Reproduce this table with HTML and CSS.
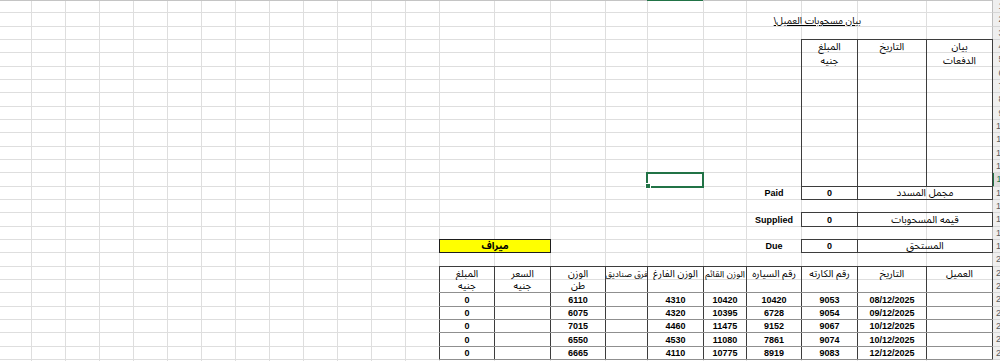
FILE: index.html
```html
<!DOCTYPE html>
<html lang="ar">
<head>
<meta charset="utf-8">
<title>بيان مسحوبات العميل</title>
<link rel="stylesheet" href="styles.css">
</head>
<body>
<main class="sheet" dir="rtl">
  <div class="grid-v"><i></i><i></i><i></i><i></i><i></i><i></i><i></i><i></i><i></i><i></i><i></i><i></i><i></i><i></i><i></i><i></i><i></i><i></i><i></i><i></i><i></i><i></i><i></i><i></i></div>
  <div class="grid-h"><i></i><i></i><i></i><i></i><i></i><i></i><i></i><i></i><i></i><i></i><i></i><i></i><i></i><i></i><i></i><i></i><i></i><i></i><i></i><i></i><i></i><i></i><i></i><i></i><i></i><i></i><i></i></div>
  <div class="cells">
    <div class="rowhead">
      <span>1</span><span>2</span><span>3</span><span>4</span><span>5</span><span>6</span><span>7</span><span>8</span><span>9</span><span>10</span><span>11</span><span>12</span><span>13</span><span class="sel">14</span><span>15</span><span>16</span><span>17</span><span>18</span><span>19</span><span>20</span><span>21</span><span>22</span><span>23</span><span>24</span><span>25</span><span>26</span><span>27</span>
    </div>
    <div class="colsel"></div>
    <div class="title">بيان مسحوبات العميل\</div>

    <div class="t1">
      <div class="t1col"><span>بيان</span><span>الدفعات</span></div>
      <div class="t1col"><span>التاريخ</span></div>
      <div class="t1col"><span>المبلغ</span><span>جنيه</span></div>
    </div>

    <div class="sum r15"><div>مجمل المسدد</div><div class="num">0</div><div class="lbl">Paid</div></div>
    <div class="sum r17"><div>قيمه المسحوبات</div><div class="num">0</div><div class="lbl">Supplied</div></div>
    <div class="sum r19"><div>المستحق</div><div class="num">0</div><div class="lbl">Due</div></div>

    <div class="badge">ميراف</div>
    <div class="selcell"></div>

    <div class="t2 r21 head"><span>العميل</span><span>التاريخ</span><span>رقم الكارته</span><span>رقم السياره</span><span class="tight">الوزن القائم</span><span>الوزن الفارغ</span><span class="tighter">فرق صناديق</span><span>الوزن</span><span>السعر</span><span>المبلغ</span></div>
    <div class="t2 r22 ruled"><span></span><span></span><span></span><span></span><span></span><span></span><span></span><span>طن</span><span>جنيه</span><span>جنيه</span></div>
    <div class="t2 r23 ruled num"><span></span><span>08/12/2025</span><span>9053</span><span>10420</span><span>10420</span><span>4310</span><span></span><span>6110</span><span></span><span>0</span></div>
    <div class="t2 r24 ruled num"><span></span><span>09/12/2025</span><span>9054</span><span>6728</span><span>10395</span><span>4320</span><span></span><span>6075</span><span></span><span>0</span></div>
    <div class="t2 r25 ruled num"><span></span><span>10/12/2025</span><span>9067</span><span>9152</span><span>11475</span><span>4460</span><span></span><span>7015</span><span></span><span>0</span></div>
    <div class="t2 r26 ruled num"><span></span><span>10/12/2025</span><span>9074</span><span>7861</span><span>11080</span><span>4530</span><span></span><span>6550</span><span></span><span>0</span></div>
    <div class="t2 r27 ruled num"><span></span><span>12/12/2025</span><span>9083</span><span>8919</span><span>10775</span><span>4110</span><span></span><span>6665</span><span></span><span>0</span></div>
  </div>
</main>
</body>
</html>
```
FILE: styles.css
```css
:root {
  --cols: [hdr] 17px [A] 66px [B] 69px [C] 56px [D] 55px [E] 43px [F] 56px [G] 42px [H] 55px [I] 56px [J] 55px [K] repeat(12, 34px) [W] 31px [end];
  --rows: repeat(27, 13.3333px);
  --rule: #3d3d3d;
  --soft: #8f8f8f;
  --grid: #dedede;
  --green: #217346;
}

html, body {
  margin: 0;
  overflow: hidden;
  background: #ffffff;
}

body {
  font-family: "Liberation Sans", "Noto Sans Arabic", "DejaVu Sans", sans-serif;
  color: #000000;
}

.sheet {
  display: grid;
  width: 1009px;
  height: 361px;
  direction: rtl;
}

.sheet > * {
  grid-area: 1 / 1;
}

/* gridlines */
.grid-v {
  display: grid;
  grid-template-columns: var(--cols);
}
.grid-v i {
  grid-row: 1 / -1;
  border-left: 1px solid var(--grid);
}
.grid-v i:first-child,
.grid-v i:last-child {
  border-left: 0;
}

.grid-h {
  display: grid;
  grid-template-rows: var(--rows);
}
.grid-h i {
  border-bottom: 1px solid var(--grid);
}
.grid-h i:first-child {
  border-top: 1px solid #c4c4c4;
}

/* content layer */
.cells {
  display: grid;
  grid-template-columns: var(--cols);
  grid-template-rows: var(--rows);
  font-size: 10px;
}

.rowhead {
  grid-column: hdr / A;
  grid-row: 1 / -1;
  display: grid;
  grid-template-rows: var(--rows);
  font-size: 9px;
  color: #5c5c5c;
}
.rowhead span {
  display: flex;
  align-items: center;
  justify-content: center;
  background: #efefef;
  border-left: 1px solid #bdbdbd;
  border-bottom: 1px solid #d6d6d6;
}
.rowhead span.sel {
  background: #dedede;
  color: var(--green);
  border-left: 2px solid var(--green);
}

.colsel {
  grid-column: F;
  grid-row: 1;
  border-top: 1px solid var(--green);
}

.title,
.t1col span,
.sum > div,
.badge,
.t2 span {
  display: flex;
  align-items: flex-end;
  justify-content: center;
  white-space: nowrap;
  line-height: 12px;
}

.title {
  grid-column: C / F;
  grid-row: 2;
  justify-self: start;
  margin-right: -4px;
  font-size: 9.5px;
  text-decoration: underline;
}

/* payments table */
.t1 {
  grid-column: A / D;
  grid-row: 4 / 15;
  margin: -1px -1px 0 0;
  display: grid;
  grid-template-columns: 66px 69px 56px;
  border-top: 1px solid var(--rule);
  border-right: 1px solid var(--rule);
  border-bottom: 1px solid var(--rule);
}
.t1col {
  display: flex;
  flex-direction: column;
  border-left: 1px solid var(--rule);
}
.t1col span {
  flex: 0 0 13.3333px;
}

/* totals */
.sum {
  grid-column: A / E;
  margin: -1px -1px 0 0;
  display: grid;
  grid-template-columns: 136px 56px 55px;
}
.r15 { grid-row: 15; }
.r17 { grid-row: 17; }
.r19 { grid-row: 19; }
.sum > div {
  border: 1px solid var(--rule);
  border-right: 0;
}
.sum > div:first-child {
  border-right: 1px solid var(--rule);
}
.sum > div.lbl {
  border-color: transparent;
  font-weight: bold;
  font-size: 9px;
  line-height: 11px;
}
.num {
  font-weight: bold;
  font-size: 9px;
}
.sum > .num,
.t2.num span {
  line-height: 11px;
}

.badge {
  grid-column: I / K;
  grid-row: 19;
  margin: -1px -1px 0 0;
  border: 1px solid #1e1e1e;
  background: #ffff00;
  font-weight: bold;
}

.selcell {
  grid-column: F;
  grid-row: 14;
  margin: -1px;
  border: 2px solid var(--green);
  position: relative;
}
.selcell::after {
  content: "";
  position: absolute;
  left: -3px;
  bottom: -3px;
  width: 4px;
  height: 4px;
  background: var(--green);
  border: 1px solid #ffffff;
}

/* trips table */
.t2 {
  grid-column: A / K;
  margin-right: -1px;
  display: grid;
  grid-template-columns: 67px 69px 56px 55px 43px 56px 42px 55px 56px 55px;
}
.t2 span {
  border-left: 1px solid var(--rule);
  overflow: hidden;
}
.t2 span:first-child {
  border-right: 1px solid var(--rule);
}
.t2 span.tight {
  font-size: 9px;
}
.t2 span.tighter {
  font-size: 8.5px;
}
.t2.head {
  margin-top: -1px;
  border-top: 1px solid var(--rule);
}
.t2.ruled {
  border-bottom: 1px solid var(--soft);
}
.r21 { grid-row: 21; }
.r22 { grid-row: 22; }
.r23 { grid-row: 23; }
.r24 { grid-row: 24; }
.r25 { grid-row: 25; }
.r26 { grid-row: 26; }
.r27 { grid-row: 27; }
```
